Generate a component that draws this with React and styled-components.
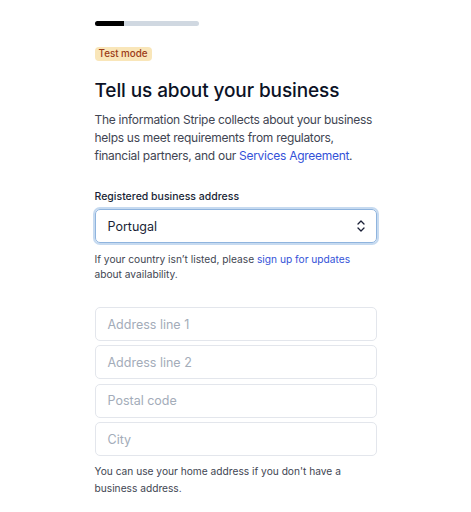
import React from "react";
import styled, { createGlobalStyle } from "styled-components";

const GlobalStyle = createGlobalStyle`
  html, body {
    margin: 0;
    padding: 0;
    background: #ffffff;
  }
  body {
    font-family: Inter, "Noto Sans", "Liberation Sans", sans-serif;
    -webkit-font-smoothing: antialiased;
  }
`;

const Page = styled.div`
  width: 282px;
  margin: 0 auto;
  padding-top: 21px;
  display: flex;
  flex-direction: column;
`;

const Progress = styled.div`
  width: 104px;
  height: 5px;
  border-radius: 3px;
  background: #d0d8e1;
  overflow: hidden;
`;

const ProgressFill = styled.div`
  height: 100%;
  background: #000000;
`;

const Badge = styled.span`
  align-self: flex-start;
  margin-top: 21px;
  padding: 1px 4px;
  border-radius: 4px;
  background: #f9e6b9;
  color: #9b3b17;
  font-size: 9.8px;
  font-weight: 500;
  line-height: 12px;
`;

const Heading = styled.h1`
  margin: 18px 0 0;
  font-size: 19px;
  font-weight: 500;
  line-height: 24px;
  color: #0c1226;
  letter-spacing: -0.1px;
`;

const Lead = styled.p`
  margin: 8px 0 0;
  font-size: 12px;
  line-height: 18px;
  letter-spacing: -0.28px;
  color: #414552;
  white-space: nowrap;
`;

const Link = styled.a`
  color: #3452d8;
  text-decoration: none;
`;

const Label = styled.div`
  margin-top: 25px;
  font-size: 10.5px;
  font-weight: 500;
  line-height: 14px;
  color: #1a1f36;
`;

const Select = styled.div`
  margin-top: 5px;
  height: 34px;
  box-sizing: border-box;
  display: flex;
  align-items: center;
  justify-content: space-between;
  padding: 0 10px 0 12px;
  border: 1px solid #8fb4de;
  border-radius: 5px;
  box-shadow: 0 0 0 2px #c6daf0;
  font-size: 12.5px;
  color: #1a1f36;
`;

const Help = styled.p`
  margin: ${({ $top }) => $top}px 0 0;
  font-size: 10.2px;
  line-height: ${({ $lh }) => $lh}px;
  color: #414552;
`;

const Fields = styled.div`
  margin-top: 25px;
  display: flex;
  flex-direction: column;
  gap: 4.4px;
`;

const Field = styled.div`
  height: 34px;
  box-sizing: border-box;
  display: flex;
  align-items: center;
  padding: 0 12px;
  border: 1px solid #e3e6ec;
  border-radius: 5px;
  font-size: 12.5px;
  color: #a3acb9;
`;

const Chevrons = () => (
  <svg width="10" height="14" viewBox="0 0 10 14" fill="none">
    <path d="M2 5L5 2L8 5" stroke="#1a1f36" strokeWidth="1.3" strokeLinecap="round" strokeLinejoin="round" />
    <path d="M2 9L5 12L8 9" stroke="#1a1f36" strokeWidth="1.3" strokeLinecap="round" strokeLinejoin="round" />
  </svg>
);

const placeholders = ["Address line 1", "Address line 2", "Postal code", "City"];

export default function App() {
  return (
    <>
      <GlobalStyle />
      <Page>
        <Progress>
          <ProgressFill style={{ width: "28%" }} />
        </Progress>
        <Badge>Test mode</Badge>
        <Heading>Tell us about your business</Heading>
        <Lead>
          The information Stripe collects about your business
          <br />
          helps us meet requirements from regulators,
          <br />
          financial partners, and our <Link href="#">Services Agreement</Link>.
        </Lead>
        <Label>Registered business address</Label>
        <Select>
          <span>Portugal</span>
          <Chevrons />
        </Select>
        <Help $top={9} $lh={15}>
          If your country isn’t listed, please <Link href="#">sign up for updates</Link>{" "}
          about availability.
        </Help>
        <Fields>
          {placeholders.map((p) => (
            <Field key={p}>{p}</Field>
          ))}
        </Fields>
        <Help $top={7} $lh={17}>
          You can use your home address if you don't have a business address.
        </Help>
      </Page>
    </>
  );
}
